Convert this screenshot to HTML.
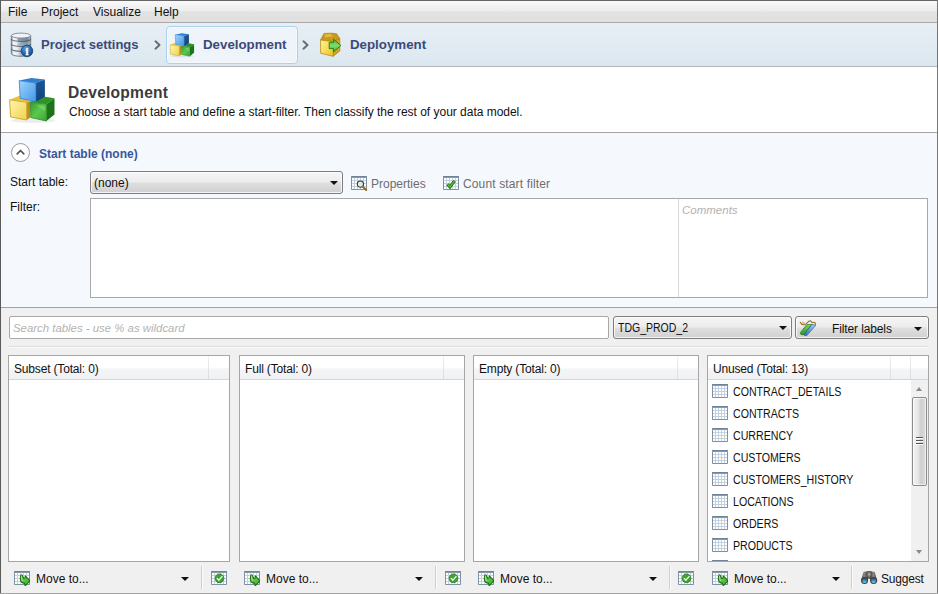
<!DOCTYPE html>
<html>
<head>
<meta charset="utf-8">
<title>Development</title>
<style>
*{box-sizing:border-box;margin:0;padding:0}
html,body{width:938px;height:594px;overflow:hidden;background:#f0f0f0}
body{font-family:"Liberation Sans",sans-serif;font-size:12px;color:#000;position:relative}
div,span,b,i{position:absolute;white-space:nowrap}
svg{position:absolute;overflow:visible}
.t{font-size:12px;line-height:14px;color:#111}
#menu{left:1px;top:1px;width:936px;height:21px;background:linear-gradient(#f9f9f9 0%,#ececec 48%,#e2e2e2 52%,#e0e0e0 100%)}
.hl{left:1px;width:936px;height:1px}
#nav{left:1px;top:23px;width:936px;height:43px;background:linear-gradient(#e8eff5,#dbe7ef)}
.navt{top:37px;font-weight:bold;font-size:13px;line-height:16px;color:#3c4a7a}
#tab{left:166px;top:26px;width:132px;height:38px;border:1px solid #a9d3ec;border-radius:4px;background:#eef4f9;box-shadow:inset 0 0 0 1px rgba(255,255,255,.5)}
#hdr{left:1px;top:67px;width:936px;height:65px;background:#fff}
#h1{left:68px;top:83px;font-weight:bold;font-size:15.6px;letter-spacing:.2px;line-height:20px;color:#3b3b3b}
#start{left:1px;top:133px;width:936px;height:174px;background:#f5f8fd}
#exp{left:11px;top:143px;width:19px;height:19px;border:1px solid #9d9d9d;border-radius:50%;background:#fff}
#stitle{left:39px;top:147px;font-weight:bold;font-size:12px;line-height:14px;color:#38579a}
.combo{height:23px;border:1px solid #7d7d7d;border-radius:3px;background:linear-gradient(#f6f6f6 0%,#ececec 48%,#dfdfdf 52%,#d0d0d0 100%);box-shadow:inset 0 0 0 1px rgba(255,255,255,.75)}
.arr{width:0;height:0;border-left:4px solid transparent;border-right:4px solid transparent;border-top:4px solid #111}
.g{color:#6d6d6d}
#ta{left:90px;top:198px;width:838px;height:100px;border:1px solid #a8a8a8;background:#fff}
#tadiv{left:678px;top:199px;width:1px;height:98px;background:#dadada}
.ph{font-style:italic;font-size:12px;line-height:14px;color:#b2b2b2}
#search{left:9px;top:316px;width:600px;height:23px;border:1px solid #a8a8a8;border-radius:2px;background:#fff}
.panel{top:355px;height:207px;border:1px solid #a6a6a6;background:#fff;overflow:hidden}
.ph2{left:0;top:0;right:0;height:24px;background:linear-gradient(#ffffff 0%,#ffffff 48%,#f4f5f7 58%,#f0f1f4 100%);border-bottom:1px solid #d5d5d5}
.ph2 b{left:5px;top:6px;font-weight:normal;font-size:12px;letter-spacing:-.17px;line-height:14px;color:#111}
.ph2 i{top:0;width:1px;height:23px;background:linear-gradient(#f0f0f0,#dadada)}
.vsep{top:566px;width:2px;height:23px;border-left:1px solid #cfcfcf;background:#fcfcfc}
.row{left:25px;font-size:12px;line-height:14px;color:#111;transform:scaleX(.885);transform-origin:0 0}
.ric{left:4px;width:16px;height:14px}
</style>
</head>
<body>

<svg width="0" height="0" style="left:0;top:0">
<defs>
<linearGradient id="gHdr" x1="0" y1="0" x2="0" y2="1"><stop offset="0" stop-color="#62788d"/><stop offset="1" stop-color="#93a6b7"/></linearGradient>
<symbol id="grid" viewBox="0 0 16 14">
<rect x="0" y="0" width="16" height="14" rx="0.8" fill="#7c92a6"/>
<rect x="0" y="0" width="16" height="2" rx="0.8" fill="url(#gHdr)"/>
<rect x="1" y="2" width="14" height="11" fill="#c4d0db"/>
<g fill="#fdfeff"><rect x="1" y="2" width="2" height="2"/><rect x="4" y="2" width="2" height="2"/><rect x="7" y="2" width="2" height="2"/><rect x="10" y="2" width="2" height="2"/><rect x="13" y="2" width="2" height="2"/><rect x="1" y="5" width="2" height="2"/><rect x="4" y="5" width="2" height="2"/><rect x="7" y="5" width="2" height="2"/><rect x="10" y="5" width="2" height="2"/><rect x="13" y="5" width="2" height="2"/><rect x="1" y="8" width="2" height="2"/><rect x="4" y="8" width="2" height="2"/><rect x="7" y="8" width="2" height="2"/><rect x="10" y="8" width="2" height="2"/><rect x="13" y="8" width="2" height="2"/><rect x="1" y="11" width="2" height="2"/><rect x="4" y="11" width="2" height="2"/><rect x="7" y="11" width="2" height="2"/><rect x="10" y="11" width="2" height="2"/><rect x="13" y="11" width="2" height="2"/></g>
</symbol>
<linearGradient id="bF" x1="0" y1="0" x2="1" y2="1"><stop offset="0" stop-color="#a4d4fb"/><stop offset="1" stop-color="#3f97e8"/></linearGradient>
<linearGradient id="bR" x1="0" y1="0" x2="0" y2="1"><stop offset="0" stop-color="#1b5696"/><stop offset="1" stop-color="#12427c"/></linearGradient>
<linearGradient id="yF" x1="0" y1="0" x2="1" y2="1"><stop offset="0" stop-color="#fff6b4"/><stop offset="1" stop-color="#f1d24a"/></linearGradient>
<linearGradient id="gF" x1="0" y1="0" x2="1" y2="1"><stop offset="0" stop-color="#2f9a2b"/><stop offset="0.5" stop-color="#5cc84e"/><stop offset="1" stop-color="#3aa634"/></linearGradient>
<symbol id="cubes" viewBox="0 0 60 60">
<ellipse cx="31" cy="50.5" rx="22" ry="2.6" fill="#000" opacity=".07"/>
<!-- yellow -->
<polygon points="7.6,29.8 17.2,25.8 28.3,31.3 24.7,32.3" fill="#e9c33a"/>
<polygon points="24.7,32.3 28.3,31.3 28.3,47.5 24.7,50" fill="#bd9019"/>
<polygon points="7.6,29.8 24.7,32.3 24.7,50 8.6,47" fill="url(#yF)" stroke="#c9a227" stroke-width="0.9" stroke-linejoin="round"/>
<!-- green -->
<polygon points="28.3,31.8 42.9,26.8 52.5,28.3 44.4,34.3" fill="#2f9428"/>
<polygon points="44.4,34.3 52.5,28.3 52.5,44.4 44.4,51" fill="#1c7319"/>
<polygon points="28.3,31.8 44.4,34.3 44.4,51 28.8,47.5" fill="url(#gF)" stroke="#2a8a24" stroke-width="0.8" stroke-linejoin="round"/>
<polygon points="34,35 43,36.8 43,41" fill="#8ee07a" opacity=".55"/>
<!-- blue -->
<polygon points="17.2,10.6 29.3,8.1 42.9,9.6 33.8,13.1" fill="#2f7fcf"/>
<polygon points="33.8,13.1 42.9,9.6 42.9,26.8 33.8,31.8" fill="url(#bR)"/>
<polygon points="17.2,10.6 33.8,13.1 33.8,31.8 18.2,28.3" fill="url(#bF)" stroke="#2d7fd0" stroke-width="0.8" stroke-linejoin="round"/>
</symbol>
<linearGradient id="cyl" x1="0" y1="0" x2="1" y2="0"><stop offset="0" stop-color="#8f9ca8"/><stop offset="0.12" stop-color="#f4f7f9"/><stop offset="0.32" stop-color="#e3e9ee"/><stop offset="0.5" stop-color="#a9b8c5"/><stop offset="0.8" stop-color="#8296a8"/><stop offset="1" stop-color="#aab7c2"/></linearGradient>
<radialGradient id="inf" cx="0.4" cy="0.3" r="0.8"><stop offset="0" stop-color="#5fa3dc"/><stop offset="0.6" stop-color="#1a63a8"/><stop offset="1" stop-color="#0c4580"/></radialGradient>
<linearGradient id="pkF" x1="0" y1="0" x2="1" y2="1"><stop offset="0" stop-color="#fff3a8"/><stop offset="0.5" stop-color="#f7dd55"/><stop offset="1" stop-color="#e8bf2c"/></linearGradient>
<linearGradient id="arG" x1="0" y1="0" x2="0" y2="1"><stop offset="0" stop-color="#3fb52f"/><stop offset="0.5" stop-color="#7ddc6a"/><stop offset="1" stop-color="#3fb52f"/></linearGradient>
<symbol id="mv" viewBox="0 0 16 15">
<path d="M7.2,3.9 C8.2,3.8 8.6,4.7 8.8,5.7 L9.7,7.5 L10.9,7.3 L11.3,4.9 L16.1,9.8 L11.2,14.8 L10.4,12.1 C8.4,12.2 6.5,10.9 6.4,8.4 C6.3,6.6 6.5,4.6 7.2,3.9 Z" fill="url(#mvG)" stroke="#1a6a0e" stroke-width="1.05" stroke-linejoin="round"/>
<path d="M7.5,5 C7.3,6.5 7.4,8.5 8.6,9.6" fill="none" stroke="#a4ec92" stroke-width="0.9" stroke-linecap="round"/>
</symbol>
<linearGradient id="mvG" x1="0" y1="0" x2="1" y2="1"><stop offset="0" stop-color="#7edc68"/><stop offset="1" stop-color="#36a626"/></linearGradient>
<symbol id="chk" viewBox="0 0 16 14">
<circle cx="8.5" cy="7.3" r="4.4" fill="#3ea52d" stroke="#2a7d1c" stroke-width="0.8"/>
<polyline points="6.2,7.4 7.9,9.2 11,5.6" fill="none" stroke="#fff" stroke-width="1.3" stroke-linecap="round" stroke-linejoin="round"/>
</symbol>
<symbol id="chev" viewBox="0 0 8 10">
<polyline points="1.5,1.3 5.5,5 1.5,8.7" fill="none" stroke="#6a6a6a" stroke-width="1.9" stroke-linecap="round" stroke-linejoin="round"/>
</symbol>
</defs>
</svg>

<div id="menu"></div>
<span class="t" style="left:8px;top:5px">File</span><span class="t" style="left:41px;top:5px">Project</span><span class="t" style="left:93px;top:5px">Visualize</span><span class="t" style="left:154px;top:5px">Help</span>
<div class="hl" style="top:22px;background:#a9a9a9"></div>
<div id="nav"></div>
<div class="hl" style="top:66px;background:#b1b7bc"></div>
<div id="tab"></div>

<!-- database icon -->
<svg style="left:4px;top:28px" width="40" height="34" viewBox="0 0 40 34">
<path d="M7.3,7.6 L7.3,25.6 A9.7,2.7 0 0 0 26.7,25.6 L26.7,7.6 Z" fill="url(#cyl)" stroke="#6c7782" stroke-width="0.9"/>
<path d="M13.5,9.8 L24.5,9.4 L24.5,12.6 L13.5,13.2 Z" fill="#71879b" opacity=".7"/>
<path d="M13.5,15 L24.5,14.6 L24.5,17 L13.5,17.8 Z" fill="#8297a9" opacity=".45"/>
<ellipse cx="17" cy="7.6" rx="9.7" ry="2.5" fill="#eff3f6" stroke="#7c8893" stroke-width="0.9"/>
<path d="M7.3,11 A9.7,2.6 0 0 0 26.7,11" fill="none" stroke="#4c5863" stroke-width="1.1" opacity=".8"/>
<path d="M7.3,15.9 A9.7,2.6 0 0 0 26.7,15.9" fill="none" stroke="#4c5863" stroke-width="1.1" opacity=".8"/>
<path d="M7.3,20.8 A9.7,2.6 0 0 0 26.7,20.8" fill="none" stroke="#4c5863" stroke-width="1.1" opacity=".8"/>
<circle cx="23" cy="23" r="5.8" fill="url(#inf)" stroke="#0b3b72" stroke-width="0.7"/>
<text x="23.1" y="26.5" text-anchor="middle" font-family="Liberation Serif, serif" font-weight="bold" font-size="10.6" fill="#fff" stroke="#fff" stroke-width="0.4">i</text>
</svg>
<div class="navt" style="left:41px">Project settings</div>
<svg style="left:154px;top:40px" width="8" height="10"><use href="#chev"/></svg>
<svg style="left:165.9px;top:29.3px" width="32.1" height="32.1"><use href="#cubes"/></svg>
<div class="navt" style="left:203px;font-size:13.3px">Development</div>
<svg style="left:302px;top:40px" width="8" height="10"><use href="#chev"/></svg>
<!-- deploy icon -->
<svg style="left:312px;top:28px" width="40" height="34" viewBox="0 0 40 34">
<polygon points="8.6,12 12,5.4 19.5,5.2 24.6,5.7 27.8,10.6 21.2,13.7" fill="#c89a1c" stroke="#a97f10" stroke-width="0.7" stroke-linejoin="round"/>
<polygon points="12.5,6.2 19,6 21,8.5 13,9.5" fill="#e2b93a"/>
<polygon points="21.2,13.7 27.8,10.6 27.8,22.9 21.2,28.3" fill="#d3a424" stroke="#a97f10" stroke-width="0.7" stroke-linejoin="round"/>
<polygon points="8.6,12 21.2,13.7 21.2,28.3 8.6,25.2" fill="url(#pkF)" stroke="#b88d16" stroke-width="0.8" stroke-linejoin="round"/>
<polygon points="17.2,14.3 21.5,14.3 21.5,11.2 28.9,17.5 21.5,23.8 21.5,20.6 17.2,20.6" fill="url(#arG)" stroke="#1f7a14" stroke-width="0.9" stroke-linejoin="round"/>
</svg>
<div class="navt" style="left:350px;font-size:13.3px">Deployment</div>

<div id="hdr"></div>
<div class="hl" style="top:132px;background:#a5a5a5"></div>
<svg style="left:2px;top:70px" width="60" height="60"><use href="#cubes"/></svg>
<div id="h1">Development</div>
<div class="t" style="left:69px;top:105px;letter-spacing:-.02px">Choose a start table and define a start-filter. Then classify the rest of your data model.</div>

<div id="start"></div>
<div class="hl" style="top:307px;background:#a0a0a0"></div>
<div id="exp"></div>
<svg style="left:16px;top:149px" width="9" height="6" viewBox="0 0 9 6"><polyline points="1.2,4.8 4.5,1.5 7.8,4.8" fill="none" stroke="#555" stroke-width="1.7" stroke-linecap="round" stroke-linejoin="round"/></svg>
<div id="stitle">Start table (none)</div>
<div class="t" style="left:10px;top:175px">Start table:</div>
<div class="combo" style="left:90px;top:171px;width:253px"><span class="t" style="left:3px;top:4px">(none)</span><div class="arr" style="left:239px;top:9px"></div></div>
<svg style="left:351px;top:176px" width="16" height="15" viewBox="0 0 16 15"><use href="#grid" width="16" height="14"/>
<circle cx="9.4" cy="8.1" r="3.1" fill="#dfe9f3" fill-opacity=".85" stroke="#333" stroke-width="1.1"/><line x1="11.8" y1="10.6" x2="15.2" y2="14" stroke="#9a6a12" stroke-width="2" stroke-linecap="round"/></svg>
<div class="t g" style="left:371px;top:177px">Properties</div>
<svg style="left:443px;top:176px" width="16" height="14" viewBox="0 0 16 14"><use href="#grid"/>
<polyline points="4.4,8.2 7,11 11.5,4.9" fill="none" stroke="#1d5c10" stroke-width="3" stroke-linejoin="miter"/><polyline points="4.6,8.3 7,10.8 11.3,5.1" fill="none" stroke="#4fc43c" stroke-width="1.5"/></svg>
<div class="t g" style="left:463px;top:177px;letter-spacing:.14px">Count start filter</div>
<div class="t" style="left:10px;top:200px">Filter:</div>
<div id="ta"></div><div id="tadiv"></div>
<div class="ph" style="left:682px;top:203px;font-size:11.5px">Comments</div>

<div id="search"></div>
<div class="ph" style="left:13px;top:321px;font-size:11.4px">Search tables - use % as wildcard</div>
<div class="combo" style="left:613px;top:316px;width:179px"><span class="t" style="left:4px;top:4px;transform:scaleX(.875);transform-origin:0 0">TDG_PROD_2</span><div class="arr" style="left:165px;top:9px"></div></div>
<div class="combo" style="left:795px;top:316px;width:134px"><span class="t" style="left:36px;top:5px;letter-spacing:-.12px">Filter labels</span><div class="arr" style="left:118px;top:10px"></div>
<svg style="left:4px;top:3px" width="16" height="16" viewBox="0 0 16 16">
<defs><linearGradient id="tgG" x1="1" y1="0" x2="0" y2="1"><stop offset="0" stop-color="#7ee05e"/><stop offset="1" stop-color="#2b9422"/></linearGradient>
<linearGradient id="tgB" x1="1" y1="0" x2="0" y2="1"><stop offset="0" stop-color="#a6d6f7"/><stop offset="1" stop-color="#2a67ab"/></linearGradient></defs>
<polygon points="0.2,12.7 6.8,4.6 12,4.3 3.6,14.7 1,14.7" fill="url(#tgG)" stroke="#1f6f18" stroke-width="0.6" stroke-linejoin="round"/>
<polygon points="3.6,14.7 12,4.3 15.8,5.3 6.8,15.6 4.7,15.6" fill="url(#tgB)" stroke="#1d4f88" stroke-width="0.6" stroke-linejoin="round"/>
<path d="M0.2,2.3 C1,4 3,5.2 5.2,4.5 C7.2,3.8 8,0.7 10.2,0.7 C12,0.8 10.8,3.2 13,2.4 C14.8,1.8 15.6,2.8 15.3,4.6" fill="none" stroke="#9a6a1c" stroke-width="1.05" stroke-linecap="round"/>
<path d="M2.8,2.2 C3.3,3.4 4,3.6 4.6,3.2" fill="none" stroke="#9a6a1c" stroke-width="0.8" stroke-linecap="round"/>
</svg>
</div>
<div style="left:9px;top:346px;width:920px;height:1px;background:#dcdcdc"></div>
<div style="left:9px;top:347px;width:920px;height:1px;background:#fbfbfb"></div>

<div class="panel" style="left:8px;width:222px"><div class="ph2"><b>Subset (Total: 0)</b><i style="left:199px"></i></div></div>
<div class="panel" style="left:239px;width:226px"><div class="ph2"><b>Full (Total: 0)</b><i style="left:203px"></i></div></div>
<div class="panel" style="left:473px;width:226px"><div class="ph2"><b>Empty (Total: 0)</b><i style="left:203px"></i></div></div>
<div class="panel" style="left:707px;width:222px"><div class="ph2"><b>Unused (Total: 13)</b><i style="left:182px"></i><i style="left:202px"></i></div>
<svg class="ric" style="top:28px" width="16" height="14"><use href="#grid"/></svg><div class="row" style="top:29px">CONTRACT_DETAILS</div>
<svg class="ric" style="top:50px" width="16" height="14"><use href="#grid"/></svg><div class="row" style="top:51px">CONTRACTS</div>
<svg class="ric" style="top:72px" width="16" height="14"><use href="#grid"/></svg><div class="row" style="top:73px">CURRENCY</div>
<svg class="ric" style="top:94px" width="16" height="14"><use href="#grid"/></svg><div class="row" style="top:95px">CUSTOMERS</div>
<svg class="ric" style="top:116px" width="16" height="14"><use href="#grid"/></svg><div class="row" style="top:117px">CUSTOMERS_HISTORY</div>
<svg class="ric" style="top:138px" width="16" height="14"><use href="#grid"/></svg><div class="row" style="top:139px">LOCATIONS</div>
<svg class="ric" style="top:160px" width="16" height="14"><use href="#grid"/></svg><div class="row" style="top:161px">ORDERS</div>
<svg class="ric" style="top:182px" width="16" height="14"><use href="#grid"/></svg><div class="row" style="top:183px">PRODUCTS</div>
<svg class="ric" style="top:204px" width="16" height="14"><use href="#grid"/></svg>

<div style="left:203px;top:24px;width:17px;height:181px;background:#f0f0f0"></div>
<div style="left:204px;top:41px;width:15px;height:89px;border:1px solid #8b8b8b;border-radius:2px;background:linear-gradient(90deg,#f3f3f3 0%,#e6e6e6 40%,#cfcfcf 60%,#dcdcdc 100%);box-shadow:inset 0 0 0 1px rgba(255,255,255,.6)"></div>
<div style="left:208px;top:81px;width:7px;height:1px;background:#555;box-shadow:0 1px 0 #fff,0 3px 0 #555,0 4px 0 #fff,0 6px 0 #555,0 7px 0 #fff"></div>
<div style="left:208px;top:31px;width:0;height:0;border-left:3.5px solid transparent;border-right:3.5px solid transparent;border-bottom:4px solid #8a8a8a"></div>
<div style="left:208px;top:194px;width:0;height:0;border-left:3.5px solid transparent;border-right:3.5px solid transparent;border-top:4px solid #8a8a8a"></div>
</div>

<svg style="left:14px;top:571px" width="16" height="15"><use href="#grid" width="16" height="14"/><use href="#mv" width="16" height="15"/></svg><div class="t" style="left:36px;top:572px">Move to...</div><div class="arr" style="left:181px;top:577px"></div><div class="vsep" style="left:201px"></div><svg style="left:211px;top:571px" width="16" height="14"><use href="#grid"/><use href="#chk"/></svg>
<svg style="left:244px;top:571px" width="16" height="15"><use href="#grid" width="16" height="14"/><use href="#mv" width="16" height="15"/></svg><div class="t" style="left:266px;top:572px">Move to...</div><div class="arr" style="left:415px;top:577px"></div><div class="vsep" style="left:435px"></div><svg style="left:445px;top:571px" width="16" height="14"><use href="#grid"/><use href="#chk"/></svg>
<svg style="left:478px;top:571px" width="16" height="15"><use href="#grid" width="16" height="14"/><use href="#mv" width="16" height="15"/></svg><div class="t" style="left:500px;top:572px">Move to...</div><div class="arr" style="left:649px;top:577px"></div><div class="vsep" style="left:669px"></div><svg style="left:678px;top:571px" width="16" height="14"><use href="#grid"/><use href="#chk"/></svg>
<svg style="left:712px;top:571px" width="16" height="15"><use href="#grid" width="16" height="14"/><use href="#mv" width="16" height="15"/></svg><div class="t" style="left:734px;top:572px">Move to...</div><div class="arr" style="left:832px;top:577px"></div><div class="vsep" style="left:851px"></div>
<svg style="left:861px;top:570px" width="17" height="14" viewBox="0 0 17 14">
<defs>
<linearGradient id="bnB" x1="0" y1="0" x2="1" y2="0"><stop offset="0" stop-color="#37342f"/><stop offset="0.45" stop-color="#8e8a82"/><stop offset="1" stop-color="#3b3833"/></linearGradient>
<linearGradient id="bnL" x1="0" y1="0" x2="0" y2="1"><stop offset="0" stop-color="#16508f"/><stop offset="0.55" stop-color="#3f9ad3"/><stop offset="1" stop-color="#7fdcf2"/></linearGradient>
<linearGradient id="bnH" x1="0" y1="0" x2="0" y2="1"><stop offset="0" stop-color="#55524c"/><stop offset="0.45" stop-color="#aaa7a0"/><stop offset="1" stop-color="#4a4741"/></linearGradient>
</defs>
<rect x="5.6" y="0.9" width="5" height="7.8" rx="1.2" fill="url(#bnH)"/>
<polygon points="2.6,1.8 6.3,1.6 7.1,11 -0.1,11" fill="url(#bnB)"/>
<polygon points="13.6,1.8 9.9,1.6 9.1,11 16.3,11" fill="url(#bnB)"/>
<circle cx="3.55" cy="10.6" r="3.5" fill="#45423c"/>
<circle cx="12.65" cy="10.6" r="3.5" fill="#45423c"/>
<circle cx="3.55" cy="10.7" r="2.35" fill="url(#bnL)"/>
<circle cx="12.65" cy="10.7" r="2.35" fill="url(#bnL)"/>
</svg>
<div class="t" style="left:881px;top:572px;letter-spacing:-.2px">Suggest</div>

<div style="left:0;top:0;width:938px;height:1px;background:#666"></div>
<div style="left:0;top:0;width:1px;height:594px;background:#5a5a5a"></div>
<div style="left:937px;top:0;width:1px;height:594px;background:#777"></div>
<div style="left:0;top:593px;width:938px;height:1px;background:#a3a3a3"></div>
</body>
</html>
